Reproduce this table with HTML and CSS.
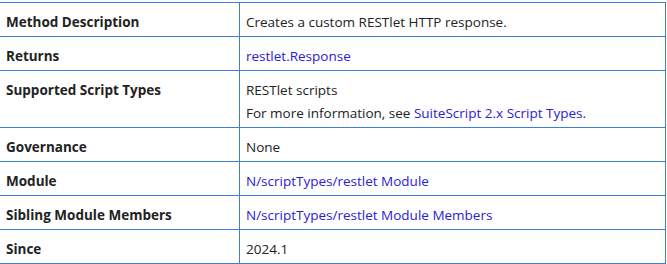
FILE: index.html
```html
<!DOCTYPE html>
<html>
<head>
<meta charset="utf-8">
<link rel="stylesheet" href="styles.css">
</head>
<body>
<table class="info">
  <tr><th>Method Description</th><td>Creates a custom RESTlet HTTP response.</td></tr>
  <tr><th>Returns</th><td><a href="#">restlet.Response</a></td></tr>
  <tr><th>Supported Script Types</th><td><p>RESTlet scripts</p><p>For more information, see <a href="#">SuiteScript 2.x Script Types</a>.</p></td></tr>
  <tr><th>Governance</th><td>None</td></tr>
  <tr><th>Module</th><td><a href="#">N/scriptTypes/restlet Module</a></td></tr>
  <tr><th>Sibling Module Members</th><td><a href="#">N/scriptTypes/restlet Module Members</a></td></tr>
  <tr><th>Since</th><td>2024.1</td></tr>
</table>
</body>
</html>
```
FILE: styles.css
```css
html, body { margin: 0; padding: 0; background: #fff; }
body { font-family: "Open Sans", "Liberation Sans", sans-serif; font-size: 13.5px; color: #222; }
.info {
  border-collapse: collapse;
  margin: 2px 0 0 -1px;
  width: 667px;
}
.info th, .info td {
  border: 1px solid #3c7ddb;
  padding: 8px 6px 2px;
  line-height: 23px;
  text-align: left;
  vertical-align: top;
}
.info th { width: 227px; font-weight: 700; color: #222; }
.info td p { margin: 0; }
.info a { color: #2b20d4; text-decoration: none; }
```
